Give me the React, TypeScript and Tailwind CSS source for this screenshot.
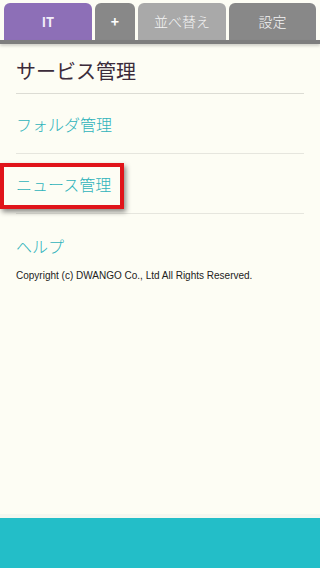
import React from "react";

export default function App() {
  return (
    <div className="min-h-screen flex flex-col bg-[#fdfdf4]" style={{ fontFamily: '"Noto Sans CJK JP", "Liberation Sans", sans-serif' }}>
      <div className="flex gap-[3px] pl-[4px] pr-[4px] pt-[3px]">
        <div className="w-[88px] h-[37px] rounded-t-[6px] bg-[#8d6fb7] flex items-center justify-center text-[13px] font-bold text-[#f3eefa]">IT</div>
        <div className="w-[40px] h-[37px] rounded-t-[6px] bg-[#888888] flex items-center justify-center text-[14px] font-bold text-white">+</div>
        <div className="w-[88px] h-[37px] rounded-t-[6px] bg-[#a9a9a9] flex items-center justify-center text-[14px] font-light text-[#f4f4f4]">並べ替え</div>
        <div className="w-[87px] h-[37px] rounded-t-[6px] bg-[#888888] flex items-center justify-center text-[14px] font-light text-[#f4f4f4]">設定</div>
      </div>
      <div className="h-[4px] bg-[#7e7e7e] shadow-[0_2px_3px_rgba(0,0,0,0.18)]" />
      <div className="px-4">
        <div className="h-[50px] flex items-center border-b border-[#dcdcd4]">
          <h1 className="text-[20px] leading-none text-[#3b2b3a] pt-[4px]">サービス管理</h1>
        </div>
        <div className="h-[60px] flex items-center border-b border-[#e6e6de] text-[16px] font-light text-[#2fb3bb]">フォルダ管理</div>
        <div className="relative h-[60px] flex items-center border-b border-[#e6e6de] text-[16px] font-light text-[#2fb3bb]">
          <span className="relative z-10">ニュース管理</span>
          <div className="absolute left-[-16px] top-[9px] w-[124px] h-[46px] border-[4px] border-[#e0141a] shadow-[2px_3px_5px_rgba(0,0,0,0.45)]" />
        </div>
        <div className="h-[60px] pt-[4px] flex items-center text-[16px] font-light text-[#2fb3bb]">ヘルプ</div>
        <p className="mt-[-4px] text-[10px] leading-[12px] text-[#222]" style={{ fontFamily: '"Liberation Sans", sans-serif' }}>
          Copyright (c) DWANGO Co., Ltd All Rights Reserved.
        </p>
      </div>
      <div className="flex-1" />
      <div className="h-[4px] bg-[#f5f7ef]" />
      <div className="h-[50px] bg-[#23bec8]" />
    </div>
  );
}
